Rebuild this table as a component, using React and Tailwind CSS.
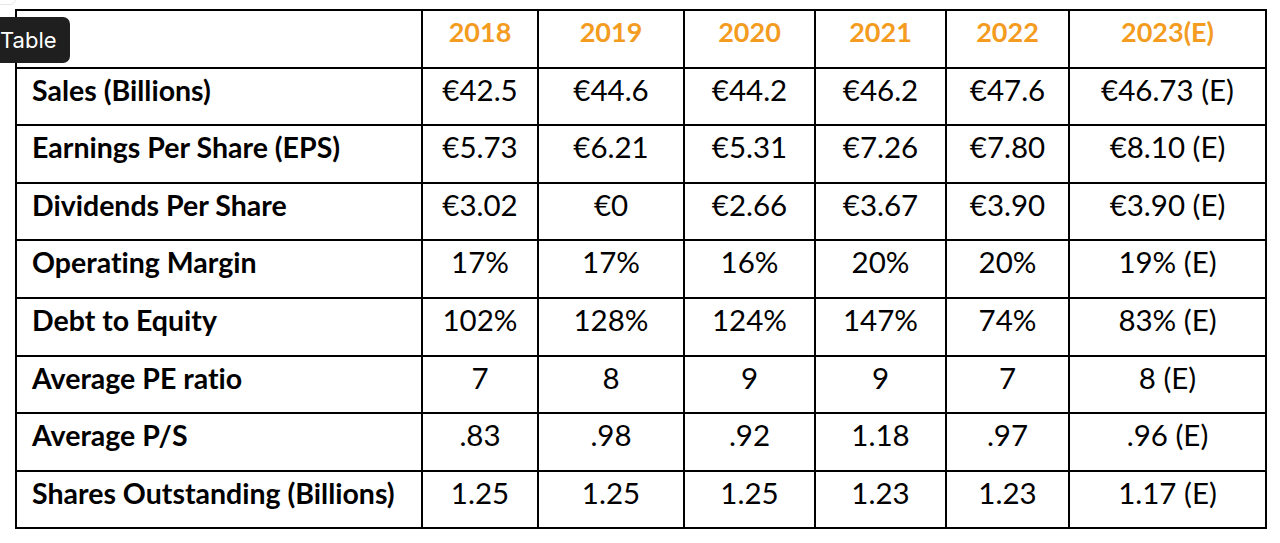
import React from 'react';

const years = ['2018', '2019', '2020', '2021', '2022', '2023(E)'];

const rows = [
  ['Sales (Billions)', '€42.5', '€44.6', '€44.2', '€46.2', '€47.6', '€46.73 (E)'],
  ['Earnings Per Share (EPS)', '€5.73', '€6.21', '€5.31', '€7.26', '€7.80', '€8.10 (E)'],
  ['Dividends Per Share', '€3.02', '€0', '€2.66', '€3.67', '€3.90', '€3.90 (E)'],
  ['Operating Margin', '17%', '17%', '16%', '20%', '20%', '19% (E)'],
  ['Debt to Equity', '102%', '128%', '124%', '147%', '74%', '83% (E)'],
  ['Average PE ratio', '7', '8', '9', '9', '7', '8 (E)'],
  ['Average P/S', '.83', '.98', '.92', '1.18', '.97', '.96 (E)'],
  ['Shares Outstanding (Billions)', '1.25', '1.25', '1.25', '1.23', '1.23', '1.17 (E)'],
];

const colWidths = ['w-[406px]', 'w-[116px]', 'w-[146px]', 'w-[131px]', 'w-[131px]', 'w-[123px]', 'w-[197px]'];

export default function App() {
  return (
    <div className="relative w-[1280px] h-[543px] bg-white overflow-hidden font-['Lato','Liberation_Sans',sans-serif] [font-variant-ligatures:none] text-black">
      {/* faint corner of a control peeking in at the top-left */}
      <div className="absolute -top-[10px] -left-[6px] w-[22px] h-[15px] rounded-md border border-gray-200 bg-white" />

      <div className="pt-[9px] pl-[15px]">
        <table className="table-fixed border-collapse border-2 border-black">
          <colgroup>
            {colWidths.map((w, i) => (
              <col key={i} className={w} />
            ))}
          </colgroup>
          <thead>
            <tr className="h-[57.6px]">
              <th className="border-2 border-black" />
              {years.map((y) => (
                <th key={y} className="border-2 border-black align-top pt-[7px] text-[27px] leading-none font-bold text-[#f39c1f] text-center">
                  {y}
                </th>
              ))}
            </tr>
          </thead>
          <tbody>
            {rows.map((r) => (
              <tr key={r[0]} className="h-[57.6px]">
                <td className="border-2 border-black align-top pt-[7px] pl-[15px] text-[28.5px] leading-none font-bold whitespace-nowrap">
                  {r[0]}
                </td>
                {r.slice(1).map((v, i) => (
                  <td key={i} className="border-2 border-black align-top pt-[6px] text-[29.5px] leading-none text-center whitespace-nowrap">
                    {v}
                  </td>
                ))}
              </tr>
            ))}
          </tbody>
        </table>
      </div>

      {/* hover tooltip */}
      <div className="absolute top-[17px] -left-[20px] w-[90px] h-[46px] pl-[20px] rounded-[7px] bg-[#1f1f1f] flex items-center">
        <span className="text-white text-[22px] leading-none font-['Inter','Liberation_Sans',sans-serif]">Table</span>
      </div>
    </div>
  );
}
